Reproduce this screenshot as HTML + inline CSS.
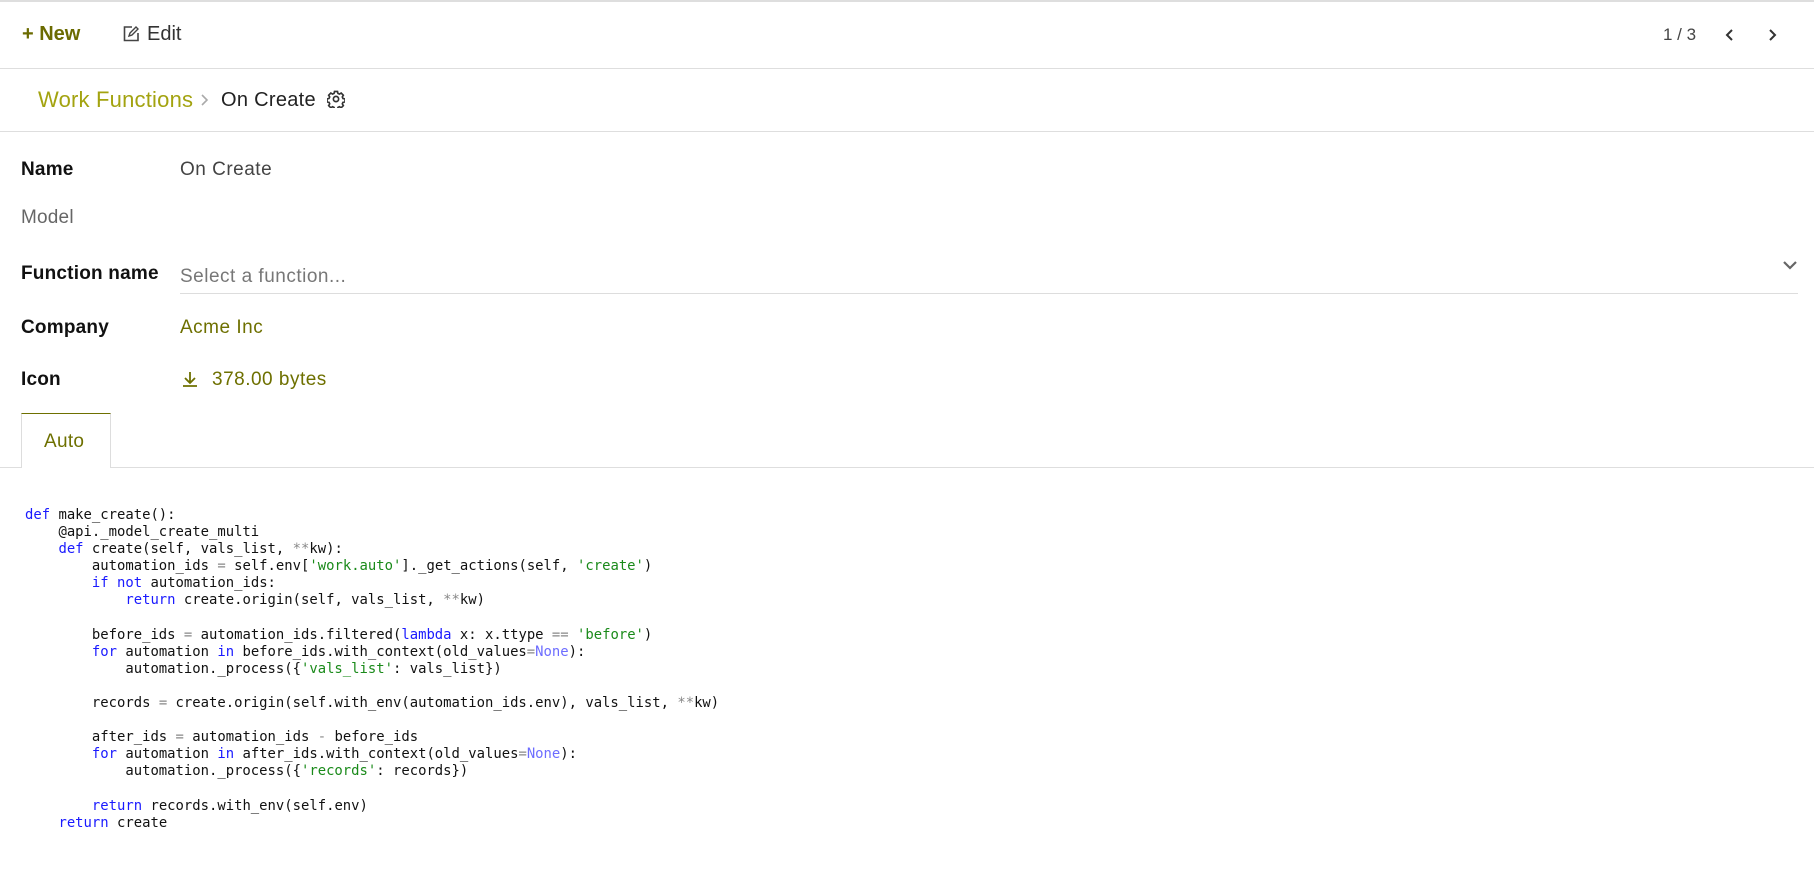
<!DOCTYPE html>
<html><head><meta charset="utf-8"><style>
*{margin:0;padding:0;box-sizing:border-box}
body{width:1814px;height:882px;background:#fff;font-family:"Liberation Sans",sans-serif;position:relative;overflow:hidden;color:#111}
.a{position:absolute;white-space:nowrap}
.hl{position:absolute;left:0;width:1814px;height:1px;background:#dedede}
.lbl{font-size:19px;font-weight:600;color:#111;left:21px;letter-spacing:0.2px}
.val{font-size:19px;left:180px;letter-spacing:0.5px}
pre{position:absolute;left:25px;top:507px;font-family:"DejaVu Sans Mono","Liberation Mono",monospace;font-size:13.9px;line-height:17.1px;color:#111}
.k{color:#1a1aff}.s{color:#1a8a1a}.o{color:#888}.n{color:#6d6dff}
</style></head><body>
<div class="hl" style="top:0;height:2px"></div>
<div class="a" style="left:22px;top:23px;font-size:20px;font-weight:700;color:#6b6b00">+ New</div>
<svg class="a" style="left:123px;top:25px" width="16" height="17" viewBox="0 0 16 17"><path d="M9 2H1.5v13.5H15V8" fill="none" stroke="#444" stroke-width="1.6"/><path d="M6 11l1-3 6-6 2 2-6 6z" fill="none" stroke="#444" stroke-width="1.4"/></svg>
<div class="a" style="left:147px;top:23px;font-size:20px;color:#333">Edit</div>
<div class="a" style="left:1663px;top:25px;font-size:17px;color:#444">1 / 3</div>
<svg class="a" style="left:1725px;top:28px" width="10" height="14"><path d="M7 2L2 7l5 5" fill="none" stroke="#333" stroke-width="2"/></svg>
<svg class="a" style="left:1767px;top:28px" width="10" height="14"><path d="M3 2l5 5-5 5" fill="none" stroke="#333" stroke-width="2"/></svg>
<div class="hl" style="top:68px"></div>
<div class="a" style="left:38px;top:87px;font-size:22px;letter-spacing:0.2px;color:#a3a310">Work Functions</div>
<svg class="a" style="left:199px;top:93px" width="10" height="14"><path d="M3 2l5 5-5 5" fill="none" stroke="#aaa" stroke-width="1.6"/></svg>
<div class="a" style="left:221px;top:89px;font-size:20px;letter-spacing:0.3px;color:#222">On Create</div>
<svg class="a" style="left:327px;top:90px" width="18" height="18" viewBox="0 0 24 24"><path d="M12 2l2 0 .6 2.6 2 .9 2.3-1.4 2.9 2.9-1.4 2.3.9 2 2.7.6v4l-2.7.6-.9 2 1.4 2.3-2.9 2.9-2.3-1.4-2 .9-.6 2.7h-4l-.6-2.7-2-.9-2.3 1.4-2.9-2.9 1.4-2.3-.9-2-2.6-.6v-4l2.6-.6.9-2-1.4-2.3 2.9-2.9 2.3 1.4 2-.9L10 2z" fill="none" stroke="#333" stroke-width="2.2"/><circle cx="12" cy="12" r="3.5" fill="none" stroke="#333" stroke-width="2.2"/></svg>
<div class="hl" style="top:131px"></div>
<div class="a lbl" style="top:159px">Name</div>
<div class="a val" style="top:159px;color:#444">On Create</div>
<div class="a lbl" style="top:207px;font-weight:400;color:#666">Model</div>
<div class="a lbl" style="top:263px">Function name</div>
<div class="a val" style="top:266px;color:#777">Select a function...</div>
<svg class="a" style="left:1782px;top:259px" width="16" height="12"><path d="M2 3l6 6 6-6" fill="none" stroke="#666" stroke-width="2.2"/></svg>
<div class="a" style="left:180px;top:293px;width:1618px;height:1px;background:#ddd"></div>
<div class="a lbl" style="top:317px">Company</div>
<div class="a val" style="top:317px;color:#6e7000">Acme Inc</div>
<div class="a lbl" style="top:369px">Icon</div>
<svg class="a" style="left:181px;top:370px" width="18" height="18"><path d="M9 2v10M4 8l5 5 5-5M2 16h14" fill="none" stroke="#6e7000" stroke-width="1.8"/></svg>
<div class="a val" style="left:212px;top:369px;color:#6e7000">378.00 bytes</div>
<div class="hl" style="top:467px"></div>
<div class="a" style="left:21px;top:413px;width:90px;height:55px;background:#fff;border:1px solid #ddd;border-top:1px solid #6e7000;border-bottom:none"></div>
<div class="a" style="left:44px;top:431px;font-size:19px;letter-spacing:0.3px;color:#6e7000">Auto</div>
<pre><span class="k">def</span> make_create():
    @api._model_create_multi
    <span class="k">def</span> create(self, vals_list, <span class="o">**</span>kw):
        automation_ids <span class="o">=</span> self.env[<span class="s">'work.auto'</span>]._get_actions(self, <span class="s">'create'</span>)
        <span class="k">if</span> <span class="k">not</span> automation_ids:
            <span class="k">return</span> create.origin(self, vals_list, <span class="o">**</span>kw)

        before_ids <span class="o">=</span> automation_ids.filtered(<span class="k">lambda</span> x: x.ttype <span class="o">==</span> <span class="s">'before'</span>)
        <span class="k">for</span> automation <span class="k">in</span> before_ids.with_context(old_values<span class="o">=</span><span class="n">None</span>):
            automation._process({<span class="s">'vals_list'</span>: vals_list})

        records <span class="o">=</span> create.origin(self.with_env(automation_ids.env), vals_list, <span class="o">**</span>kw)

        after_ids <span class="o">=</span> automation_ids <span class="o">-</span> before_ids
        <span class="k">for</span> automation <span class="k">in</span> after_ids.with_context(old_values<span class="o">=</span><span class="n">None</span>):
            automation._process({<span class="s">'records'</span>: records})

        <span class="k">return</span> records.with_env(self.env)
    <span class="k">return</span> create</pre>
</body></html>
